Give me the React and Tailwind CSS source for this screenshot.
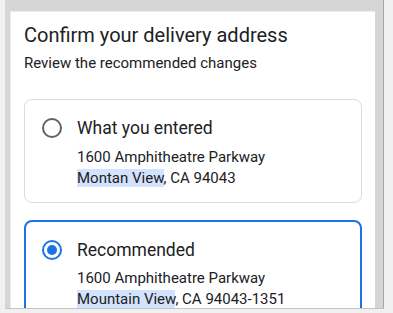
export default function App() {
  return (
    <div className="w-[393px] h-[313px] bg-[#f1f1f1] overflow-hidden font-['Roboto',sans-serif]">
      <div className="ml-[5px] w-[379px] h-[309px] bg-[#d6d6d6] border-r border-r-[#a8a8a8] border-b border-b-[#c4c4c4] pt-[11px] pl-[5px] pr-[8px]">
        <div className="h-full bg-white overflow-hidden px-[14px] pr-[13px] pt-[10px] shadow-[inset_1px_1px_0_#ececec]">
          <h1 className="text-[20px] leading-[28px] text-[#202124]">
            Confirm your delivery address
          </h1>
          <p className="mt-[4px] text-[15px] leading-[20px] text-[#202124]">
            Review the recommended changes
          </p>

          <div className="mt-[26px] flex flex-col gap-[17px]">
            <div className="rounded-[8px] border border-[#dadce0] pt-[16px] pb-[13px] pl-[17px] pr-4">
              <div className="flex items-center gap-[15px]">
                <span className="w-[20px] h-[20px] rounded-full border-2 border-[#5f6368] shrink-0" />
                <span className="text-[17.5px] leading-[24px] text-[#202124]">What you entered</span>
              </div>
              <div className="pl-[35px] mt-[7px] text-[15px] leading-[21px] text-[#202124]">
                <div>1600 Amphitheatre Parkway</div>
                <div>
                  <span className="bg-[#d3e3fd]">Montan View</span>, CA 94043
                </div>
              </div>
            </div>

            <div className="rounded-[8px] border-2 border-[#1a73e8] pt-[16px] pb-[14px] pl-[16px] pr-4">
              <div className="flex items-center gap-[15px]">
                <span className="w-[20px] h-[20px] rounded-full border-2 border-[#1a73e8] shrink-0 flex items-center justify-center">
                  <span className="w-[10px] h-[10px] rounded-full bg-[#1a73e8]" />
                </span>
                <span className="text-[17.5px] leading-[24px] text-[#202124]">Recommended</span>
              </div>
              <div className="pl-[35px] mt-[6px] text-[15px] leading-[21px] text-[#202124]">
                <div>1600 Amphitheatre Parkway</div>
                <div>
                  <span className="bg-[#d3e3fd]">Mountain View</span>, CA 94043-1351
                </div>
              </div>
            </div>
          </div>
        </div>
      </div>
    </div>
  )
}
